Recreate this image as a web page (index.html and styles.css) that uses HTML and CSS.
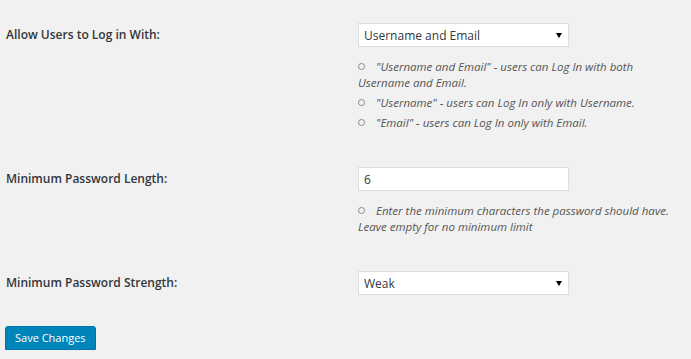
FILE: index.html
```html
<!DOCTYPE html>
<html lang="en">

<head>
    <meta charset="UTF-8">
    <meta name="viewport" content="width=device-width, initial-scale=1.0">
    <title>Login Settings</title>
    <link rel="stylesheet" href="styles.css">
</head>

<body>
    <form class="settings">
        <div class="row">
            <label class="row-label">Allow Users to Log in With:</label>
            <div class="row-field">
                <div class="select-wrap">
                    <select class="field">
                        <option>Username and Email</option>
                        <option>Username</option>
                        <option>Email</option>
                    </select>
                </div>
                <ul class="desc">
                    <li>"Username and Email" - users can Log In with both Username and Email.</li>
                    <li>"Username" - users can Log In only with Username.</li>
                    <li>"Email" - users can Log In only with Email.</li>
                </ul>
            </div>
        </div>
        <div class="row">
            <label class="row-label">Minimum Password Length:</label>
            <div class="row-field">
                <input class="field" type="text" value="6">
                <ul class="desc">
                    <li>Enter the minimum characters the password should have. Leave empty for no minimum limit</li>
                </ul>
            </div>
        </div>
        <div class="row">
            <label class="row-label">Minimum Password Strength:</label>
            <div class="row-field">
                <div class="select-wrap">
                    <select class="field">
                        <option>Weak</option>
                        <option>Medium</option>
                        <option>Strong</option>
                    </select>
                </div>
            </div>
        </div>
        <button class="btn-save" type="button">Save Changes</button>
    </form>
</body>

</html>
```

FILE: styles.css
```css
* {
    padding: 0;
    margin: 0;
    box-sizing: border-box;
    list-style: none;
}

body {
    background-color: #f1f1f1;
    font-family: "Open Sans", "Liberation Sans", sans-serif;
    color: #23282d;
}

.settings {
    padding: 23px 5px 0;
}

.row {
    display: flex;
    margin-bottom: 36px;
}

.row:last-of-type {
    margin-bottom: 30px;
}

.row-label {
    width: 353px;
    padding-left: 1px;
    line-height: 24px;
    font-size: 12px;
    font-weight: 600;
    color: #32373c;
}

.row-field {
    width: 320px;
}

.select-wrap {
    position: relative;
    width: 211px;
}

.select-wrap::after {
    content: "";
    position: absolute;
    top: 10px;
    right: 7px;
    border-left: 3px solid transparent;
    border-right: 3px solid transparent;
    border-top: 5px solid #000;
    pointer-events: none;
}

.field {
    display: block;
    width: 211px;
    height: 24px;
    padding: 0 5px;
    border: 1px solid #ddd;
    background-color: #fff;
    font-family: inherit;
    font-size: 12px;
    color: #32373c;
    outline: none;
    border-radius: 0;
    -webkit-appearance: none;
    appearance: none;
}

.desc {
    margin-top: 12px;
    font-size: 11.5px;
    line-height: 16px;
    font-style: italic;
    color: #555;
}

.desc li {
    margin-bottom: 4px;
}

.desc li:last-child {
    margin-bottom: 0;
}

.desc li::before {
    content: "";
    display: inline-block;
    width: 5px;
    height: 5px;
    margin: 0 11px 2px 0;
    border: 1px solid #888;
    border-radius: 50%;
    vertical-align: middle;
}

.btn-save {
    height: 24px;
    padding: 0 9px;
    border: 1px solid #0073aa;
    border-radius: 3px;
    background-color: #0085ba;
    box-shadow: 0 1px 0 #006799;
    color: #fff;
    font-family: inherit;
    font-size: 11px;
    cursor: pointer;
}
```
